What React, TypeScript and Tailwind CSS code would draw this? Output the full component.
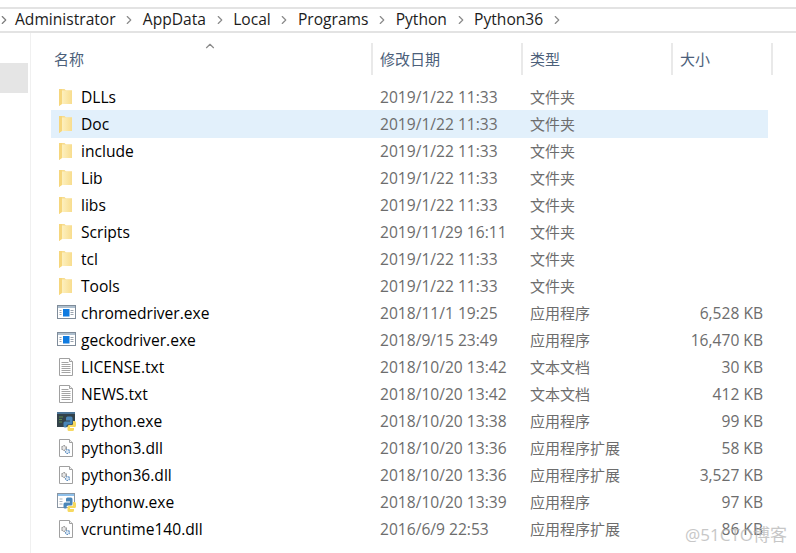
import { ChevronRight, ChevronUp } from "lucide-react"

interface IFile {
  name: string
  date: string
  type: string
  size?: string
  icon: string
  selected?: boolean
}

const crumbs = ["Administrator", "AppData", "Local", "Programs", "Python", "Python36"]

const files: IFile[] = [
  { name: "DLLs", date: "2019/1/22 11:33", type: "文件夹", icon: "folder" },
  { name: "Doc", date: "2019/1/22 11:33", type: "文件夹", icon: "folder", selected: true },
  { name: "include", date: "2019/1/22 11:33", type: "文件夹", icon: "folder" },
  { name: "Lib", date: "2019/1/22 11:33", type: "文件夹", icon: "folder" },
  { name: "libs", date: "2019/1/22 11:33", type: "文件夹", icon: "folder" },
  { name: "Scripts", date: "2019/11/29 16:11", type: "文件夹", icon: "folder" },
  { name: "tcl", date: "2019/1/22 11:33", type: "文件夹", icon: "folder" },
  { name: "Tools", date: "2019/1/22 11:33", type: "文件夹", icon: "folder" },
  { name: "chromedriver.exe", date: "2018/11/1 19:25", type: "应用程序", size: "6,528 KB", icon: "exe" },
  { name: "geckodriver.exe", date: "2018/9/15 23:49", type: "应用程序", size: "16,470 KB", icon: "exe" },
  { name: "LICENSE.txt", date: "2018/10/20 13:42", type: "文本文档", size: "30 KB", icon: "txt" },
  { name: "NEWS.txt", date: "2018/10/20 13:42", type: "文本文档", size: "412 KB", icon: "txt" },
  { name: "python.exe", date: "2018/10/20 13:38", type: "应用程序", size: "99 KB", icon: "python" },
  { name: "python3.dll", date: "2018/10/20 13:36", type: "应用程序扩展", size: "58 KB", icon: "dll" },
  { name: "python36.dll", date: "2018/10/20 13:36", type: "应用程序扩展", size: "3,527 KB", icon: "dll" },
  { name: "pythonw.exe", date: "2018/10/20 13:39", type: "应用程序", size: "97 KB", icon: "pythonw" },
  { name: "vcruntime140.dll", date: "2016/6/9 22:53", type: "应用程序扩展", size: "86 KB", icon: "dll" },
]

const Snake = () => (
  <>
    <path d="M10.500 5.500h3.500a1.500 1.500 0 0 1 1.500 1.500v5a1.500 1.500 0 0 1-1.500 1.500h-3a1.500 1.500 0 0 0-1.500 1.500v1.500H8A1.500 1.500 0 0 1 6.500 15v-3A1.500 1.500 0 0 1 8 10.500h5v-1H9V7a1.500 1.500 0 0 1 1.500-1.500z" fill="#4a86b8" />
    <path d="M16 10h1.500A1.500 1.500 0 0 1 19 11.500v3a1.500 1.500 0 0 1-1.500 1.500H13v1h4v1.500a1.500 1.500 0 0 1-1.500 1.500h-3.500a1.500 1.500 0 0 1-1.500-1.500V15.500a1.500 1.500 0 0 1 1.500-1.500h2.500a1.500 1.500 0 0 0 1.500-1.500z" fill="#f7d95f" />
  </>
)

const FileIcon = ({ kind }: { kind: string }) => {
  if (kind === "folder") {
    return (
      <svg width="20" height="20" viewBox="0 0 20 20">
        <defs>
          <linearGradient id="folderFront" x1="0" y1="0" x2="1" y2="0">
            <stop offset="0" stopColor="#fdf0bf" />
            <stop offset="1" stopColor="#f8dd8e" />
          </linearGradient>
        </defs>
        <path d="M2 2h5.500l1.500 1.500h6V17H4.500L2 19z" fill="#f7dc8f" />
        <path d="M5 3.500h10V17H5z" fill="url(#folderFront)" />
        <path d="M2 2h3v15l-3 2z" fill="#f6d67c" />
      </svg>
    )
  }
  if (kind === "exe") {
    return (
      <svg width="20" height="20" viewBox="0 0 20 20">
        <rect x="0.500" y="2.500" width="18" height="13" fill="#fff" stroke="#7f8c9a" />
        <rect x="1" y="3" width="17" height="2" fill="#aebfce" />
        <rect x="6" y="6" width="6.500" height="7.500" fill="#0f7be0" />
        <path d="M2.500 7.500h2M2.500 9.500h2M2.500 11.500h2M13.500 7.500h3M13.500 9.500h3M13.500 11.500h3" stroke="#9aa3ad" />
      </svg>
    )
  }
  if (kind === "txt" || kind === "dll") {
    return (
      <svg width="20" height="20" viewBox="0 0 20 20">
        <path d="M2.500 1.500h10l3 3v14h-13z" fill="#fff" stroke="#a0a0a0" />
        <path d="M12.500 1.500v3h3" fill="#eee" stroke="#a0a0a0" />
        {kind === "txt" ? (
          <path d="M4.500 5.500h7M4.500 7.500h9M4.500 9.500h9M4.500 11.500h9M4.500 13.500h9M4.500 15.500h9" stroke="#a4a4a4" />
        ) : (
          <>
            <circle cx="7" cy="10" r="2.300" fill="#e8e8e8" stroke="#888" strokeWidth="1.200" strokeDasharray="1.500 0.800" />
            <circle cx="10.500" cy="13.500" r="2" fill="#dce8f4" stroke="#5f8fc0" strokeWidth="1.200" strokeDasharray="1.500 0.800" />
          </>
        )}
      </svg>
    )
  }
  if (kind === "python") {
    return (
      <svg width="20" height="20" viewBox="0 0 20 20">
        <rect x="0" y="1" width="18" height="15" fill="#33424a" />
        <rect x="0" y="1" width="18" height="2" fill="#4c7597" />
        <path d="M2 6h4M2 8.500h3M2 11h3" stroke="#5d8a4a" />
        <Snake />
      </svg>
    )
  }
  return (
    <svg width="20" height="20" viewBox="0 0 20 20">
      <rect x="0.500" y="1.500" width="17" height="14" fill="#fff" stroke="#8a96a3" />
      <rect x="1" y="2" width="16" height="2" fill="#8fc0ea" />
      <path d="M2.500 7h3M2.500 9.500h3M2.500 12h3" stroke="#a9b2bb" />
      <Snake />
    </svg>
  )
}

const Header = ({ label, width }: { label: string; width: string }) => (
  <div className={`${width} flex h-[32px] items-center border-r-2 border-[#e9e9e9] text-[15px] text-[#4c607a]`}>
    {label}
  </div>
)

const Row = ({ file }: { file: IFile }) => (
  <div className={`flex w-[717px] items-center ${file.selected ? "-mt-px h-[28px] bg-[#e2f0fb] pt-px" : "h-[27px]"}`}>
    <div className="flex w-[329px] items-center">
      <div className="ml-[6px] mr-[4px] flex w-[20px] justify-center">
        <FileIcon kind={file.icon} />
      </div>
      <span className="text-[15.6px] text-black">{file.name}</span>
    </div>
    <span className="w-[150px] text-[15.6px] text-[#6d6d6d]">{file.date}</span>
    <span className="w-[142px] text-[15px] text-[#6d6d6d]">{file.type}</span>
    <span className="w-[91px] text-right text-[15.6px] text-[#6d6d6d]">{file.size}</span>
  </div>
)

const App = () => {
  return (
    <div className="relative h-[553px] w-[796px] overflow-hidden bg-white font-['Open_Sans','Noto_Sans_CJK_SC',sans-serif]">
      {/* Breadcrumb */}
      <div className="mt-[7px] flex h-[26px] items-center border-y-2 border-[#e3e3e3] pb-px">
        <ChevronRight className="-ml-[3px] mr-[4px] h-[14px] w-[14px] text-[#7d7d7d]" />
        {crumbs.map((crumb) => (
          <div key={crumb} className="flex items-center">
            <span className="text-[15.6px] text-[#1c1c1c]">{crumb}</span>
            <ChevronRight className="mx-[6.600px] h-[14px] w-[14px] text-[#8a8a8a]" />
          </div>
        ))}
      </div>

      <div className="flex">
        {/* Nav pane */}
        <div className="h-[520px] w-[31px] border-r border-[#f0f0f0] pt-[30px]">
          <div className="mr-[2px] h-[30px] bg-[#e5e5e5]" />
        </div>

        {/* File list */}
        <div className="ml-[20px] pt-[10px]">
          <div className="relative flex">
            <ChevronUp className="absolute left-[152px] -top-[4px] h-[14px] w-[14px] text-[#8a8a8a]" />
            <Header label="名称" width="w-[322px] pl-[3px]" />
            <Header label="修改日期" width="w-[150px] pl-[7px]" />
            <Header label="类型" width="w-[150px] pl-[7px]" />
            <Header label="大小" width="w-[100px] pl-[7px]" />
          </div>
          <div className="mt-[9px]">
            {files.map((file) => (
              <Row key={file.name} file={file} />
            ))}
          </div>
        </div>
      </div>

      {/* Watermark */}
      <span className="absolute bottom-[6px] right-[9px] text-[17px] text-[#b5b5b5] opacity-75">@51CTO博客</span>
    </div>
  )
}

export default App
